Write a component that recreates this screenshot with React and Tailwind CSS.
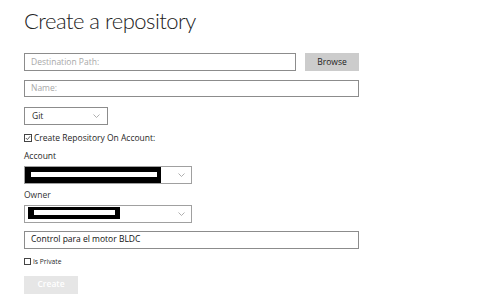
import React from 'react';

const Chevron = () => (
   <svg width="7" height="4" viewBox="0 0 7 4" fill="none" stroke="#9a9a9a" strokeWidth="0.8">
      <path d="M0.5 0.5 L3.5 3.5 L6.5 0.5" />
   </svg>
);

const Redacted = ({ width, barWidth }) => (
   <div className="h-full bg-black flex items-center pl-[6px]" style={{ width }}>
      <div className="h-[5px] bg-white" style={{ width: barWidth }} />
   </div>
);

const App = () => {
   return (
       <div className="w-[478px] h-[306px] bg-white pl-[24px] text-[#1f1f1f]" style={{ fontFamily: '"Open Sans", "Noto Sans", sans-serif' }}>
          <h1 className="text-[22px] font-light leading-none pt-[10px] tracking-[-0.5px] text-[#222]" style={{ fontFamily: 'Lato, "Open Sans", sans-serif' }}>Create a repository</h1>

          <div className="flex items-center mt-[21px] gap-[9px]">
             <div className="w-[272px] h-[18px] border border-[#8c8c8c] flex items-center pl-[6px] text-[8.5px] text-[#a8a8a8]">
                Destination Path:
             </div>
             <button className="w-[54px] h-[18px] bg-[#cccccc] text-[8.5px] text-[#222]">Browse</button>
          </div>

          <div className="w-[335px] h-[17px] mt-[9px] border border-[#8c8c8c] flex items-center pl-[6px] text-[8.5px] text-[#a8a8a8]">
             Name:
          </div>

          <div className="w-[84px] h-[18px] mt-[10px] border border-[#8c8c8c] flex items-center justify-between pl-[7px] pr-[7px] text-[8.5px]">
             <span>Git</span>
             <Chevron />
          </div>

          <div className="flex items-center gap-[2px] mt-[7px] text-[8.5px]">
             <span className="w-[8px] h-[8px] border border-[#444] flex items-center justify-center">
                <svg width="6" height="6" viewBox="0 0 6 6" fill="none" stroke="#333" strokeWidth="0.8">
                   <path d="M0.8 3 L2.4 4.6 L5.2 1.2" />
                </svg>
             </span>
             <span>Create Repository On Account:</span>
          </div>

          <div className="text-[8.5px] mt-[6px] leading-[10px]">Account</div>
          <div className="w-[168px] h-[18px] mt-[5px] border border-[#a0a0a0] flex items-center justify-between pr-[6px]">
             <Redacted width={136} barWidth={126} />
             <Chevron />
          </div>

          <div className="text-[8.5px] mt-[6px] leading-[10px] text-[#333]">Owner</div>
          <div className="w-[168px] h-[18px] mt-[5px] border border-[#a0a0a0] flex items-center justify-between pr-[6px]">
             <div className="h-full pl-[3px] pt-[1px] pb-[3px]">
                <Redacted width={92} barWidth={81} />
             </div>
             <Chevron />
          </div>

          <div className="w-[335px] h-[18px] mt-[8px] border border-[#8c8c8c] flex items-center pl-[6px] text-[8.5px] text-[#111]">
             Control para el motor BLDC
          </div>

          <div className="flex items-center gap-[2px] mt-[8px] text-[6.7px]">
             <span className="w-[7px] h-[7px] border border-[#444]" />
             <span>Is Private</span>
          </div>

          <button className="w-[54px] h-[18px] mt-[9px] bg-[#e6e6e6] text-white text-[8.5px] font-semibold">Create</button>
       </div>
   );
};

export default App;
